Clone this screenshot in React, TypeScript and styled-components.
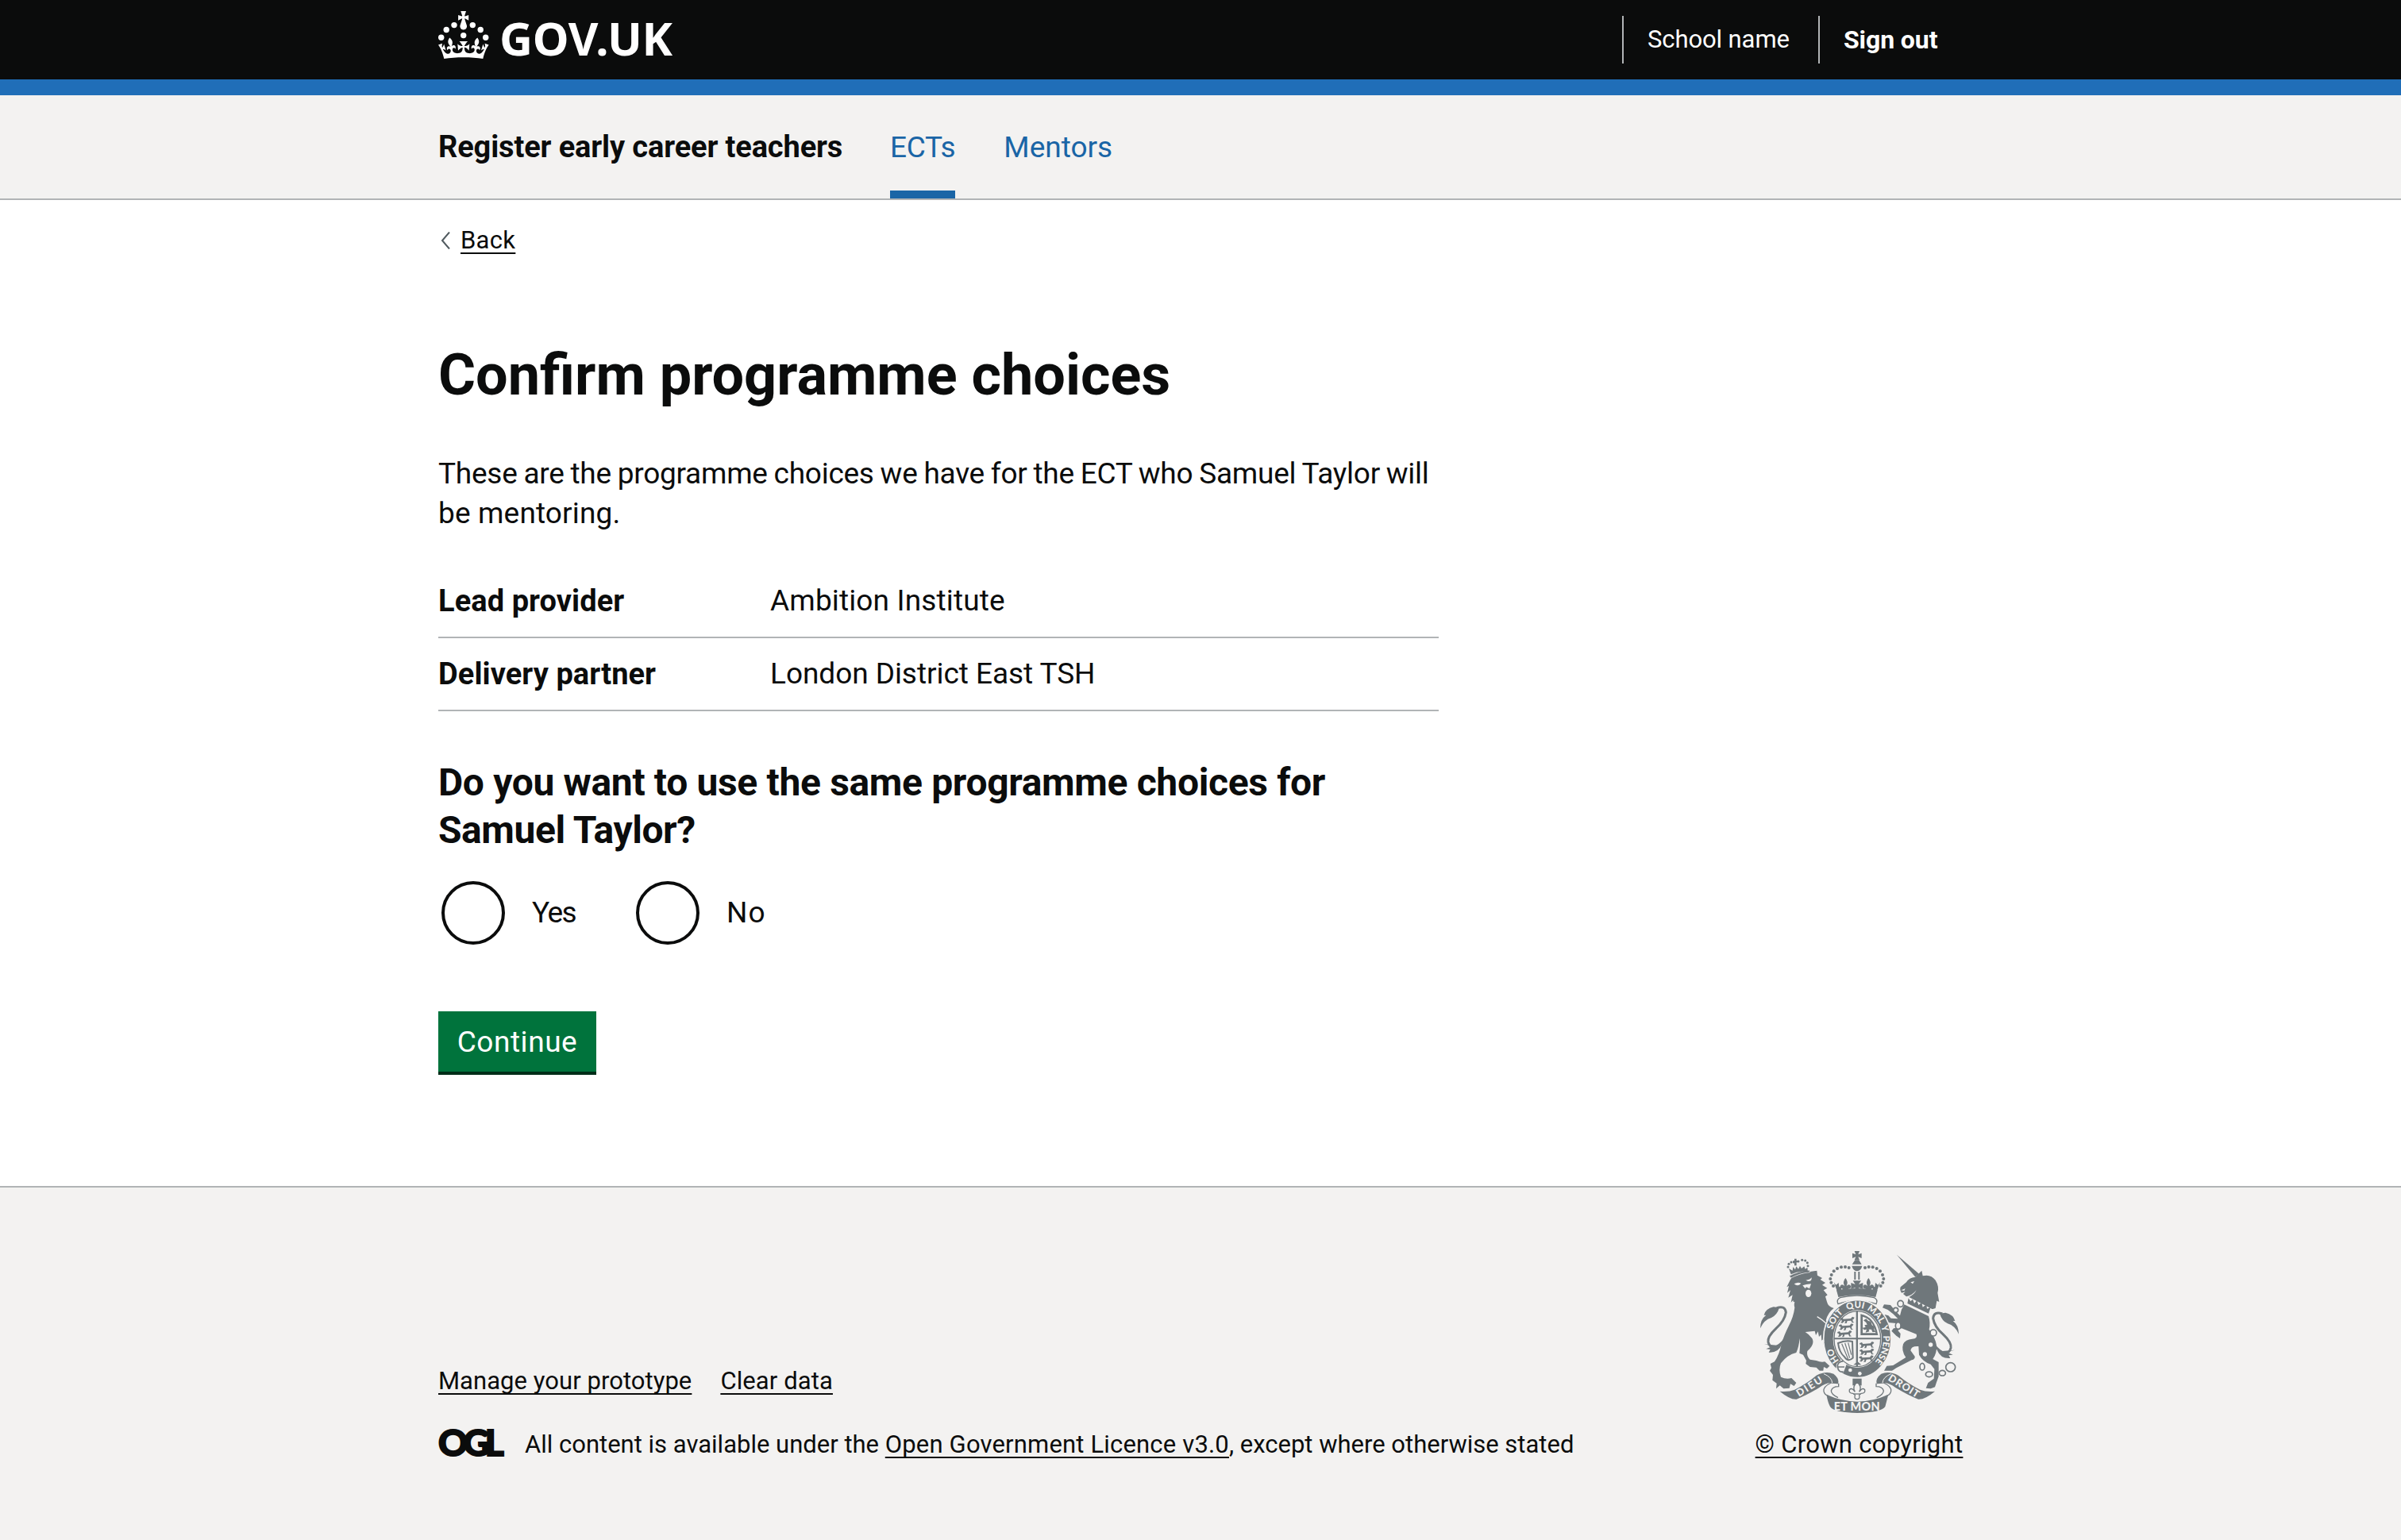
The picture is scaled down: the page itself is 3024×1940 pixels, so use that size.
import React from "react";
import styled, { createGlobalStyle } from "styled-components";

const ink = "#0b0c0c";
const grey = "#f3f2f1";
const rule = "#b1b4b6";
const blue = "#1a65a6";
const crestGrey = "#6f777b";

const GlobalStyle = createGlobalStyle`
  * { box-sizing: border-box; }
  body {
    margin: 0;
    background: #fff;
    color: ${ink};
    font-family: Roboto, "Liberation Sans", sans-serif;
    -webkit-font-smoothing: antialiased;
  }
  h1, h2, p, dl, dt, dd, legend { margin: 0; padding: 0; border: 0; }
`;

const Page = styled.div`
  display: flex;
  flex-direction: column;
  min-height: 1940px;
`;

const Container = styled.div`
  width: 1920px;
  margin: 0 auto;
`;

const Header = styled.header`
  height: 120px;
  background: ${ink};
  border-bottom: 20px solid #206eb8;
  color: #fff;
`;

const HeaderInner = styled(Container)`
  display: flex;
  justify-content: space-between;
  align-items: flex-start;
`;

const Logo = styled.a`
  display: flex;
  gap: 13px;
  padding-top: 14px;
  color: #fff;
`;

const Wordmark = styled.span`
  padding-top: 4px;
  font: 700 58px/60px "Noto Sans", "Liberation Sans", sans-serif;
  letter-spacing: -0.3px;
`;

const Account = styled.div`
  display: flex;
  padding-top: 20px;
`;

const AccountItem = styled.a<{ $width: number; $bold?: boolean }>`
  width: ${(p) => p.$width}px;
  height: 60px;
  padding-left: 30px;
  border-left: 2px solid ${rule};
  font-size: ${(p) => (p.$bold ? 32 : 31)}px;
  font-weight: ${(p) => (p.$bold ? 700 : 400)};
  line-height: 60px;
  letter-spacing: -0.1px;
`;

const ServiceNav = styled.nav`
  height: 132px;
  background: ${grey};
  border-bottom: 2px solid ${rule};
`;

const ServiceNavInner = styled(Container)`
  display: flex;
  gap: 61px;
  line-height: 131px;
`;

const ServiceName = styled.span`
  width: 508px;
  font-size: 38px;
  font-weight: 700;
  letter-spacing: -0.13px;
  white-space: nowrap;
`;

const NavLink = styled.a<{ $active?: boolean }>`
  height: 130px;
  min-width: 82px;
  color: ${blue};
  font-size: 37px;
  letter-spacing: ${(p) => (p.$active ? -0.33 : 0)}px;
  box-shadow: ${(p) => (p.$active ? `inset 0 -10px ${blue}` : "none")};
`;

const TextLink = styled.a<{ $spacing?: number }>`
  color: ${ink};
  letter-spacing: ${(p) => p.$spacing ?? 0}px;
  text-decoration: underline;
  text-decoration-thickness: 2px;
  text-underline-offset: 5px;
  text-decoration-skip-ink: none;
`;

const BackRow = styled.div`
  display: flex;
  align-items: center;
  gap: 13px;
  height: 40px;
  margin-top: 31px;
  padding-left: 3px;
  font-size: 31px;
  line-height: 40px;
`;

const Main = styled.main`
  width: 1260px;
  padding-bottom: 144px;
`;

const Title = styled.h1`
  margin-top: 112px;
  font-size: 72px;
  line-height: 75px;
  font-weight: 700;
`;

const Intro = styled.p`
  margin-top: 62px;
  font-size: 37px;
  line-height: 50px;
`;

const Line = styled.span<{ $spacing: number; $word?: number }>`
  display: block;
  letter-spacing: ${(p) => p.$spacing}px;
  word-spacing: ${(p) => p.$word ?? 0}px;
  white-space: nowrap;
`;

const SummaryList = styled.dl`
  margin-top: 60px;
`;

const SummaryRow = styled.div`
  display: grid;
  grid-template-columns: 418px 1fr;
  padding: 20px 0;
  border-bottom: 2px solid ${rule};
  line-height: 50px;
  &:first-child { padding-top: 0; }
`;

const Key = styled.dt`
  font-size: 38px;
  font-weight: 700;
  letter-spacing: 0.08px;
`;

const Value = styled.dd<{ $spacing: number }>`
  font-size: 37px;
  letter-spacing: ${(p) => p.$spacing}px;
`;

const Choices = styled.fieldset`
  min-width: 0;
  margin: 60px 0 0;
  padding: 0;
  border: 0;
`;

const Question = styled.legend`
  font-size: 48px;
  line-height: 60px;
  font-weight: 700;
`;

const Radios = styled.div`
  display: flex;
  padding: 34px 0 0 4px;
`;

const Radio = styled.label<{ $spacing: number }>`
  display: flex;
  align-items: center;
  gap: 34px;
  width: 245px;
  font-size: 37px;
  line-height: 80px;
  letter-spacing: ${(p) => p.$spacing}px;
`;

const RadioInput = styled.input`
  appearance: none;
  flex: none;
  width: 80px;
  height: 80px;
  margin: 0;
  border: 4px solid ${ink};
  border-radius: 50%;
  background: #fff;
`;

const Button = styled.button`
  display: block;
  width: 199px;
  height: 76px;
  margin-top: 84px;
  padding: 2px 0 0;
  border: 0;
  background: #00733c;
  box-shadow: 0 4px 0 #002d18;
  color: #fff;
  font: 400 37px/74px Roboto, "Liberation Sans", sans-serif;
  letter-spacing: 0.55px;
`;

const Footer = styled.footer`
  flex: 1;
  padding: 80px 0 100px;
  background: ${grey};
  border-top: 2px solid ${rule};
`;

const FooterInner = styled(Container)`
  display: flex;
  justify-content: space-between;
  align-items: flex-end;
  font-size: 31px;
  line-height: 40px;
`;

const FooterMeta = styled.div`
  display: flex;
  flex-direction: column;
  gap: 40px;
`;

const FooterLinks = styled.div`
  display: flex;
  gap: 36px;
`;

const Licence = styled.div`
  display: flex;
  white-space: pre;
`;

const Ogl = styled.span`
  width: 109px;
  height: 40px;
  font: 900 46px/34px Lato, "Liberation Sans", sans-serif;
  letter-spacing: -6px;
  -webkit-text-stroke: 2px ${ink};
`;

const Copyright = styled.div`
  display: flex;
  flex-direction: column;
  align-items: center;
  gap: 20px;
  width: 261px;
  white-space: nowrap;
`;

const Crown = () => (
  <svg width="64" height="60" viewBox="0 0 64 60" fill="currentColor" aria-hidden="true">
    <circle cx="20" cy="17.6" r="3.7" />
    <circle cx="10.2" cy="23.5" r="3.7" />
    <circle cx="3.7" cy="33.2" r="3.7" />
    <circle cx="31.7" cy="30.6" r="3.7" />
    <circle cx="43.3" cy="17.6" r="3.7" />
    <circle cx="53.2" cy="23.5" r="3.7" />
    <circle cx="59.7" cy="33.2" r="3.7" />
    <path d="M33.1,9.8c.2-.1.3-.3.5-.5l4.6,2.4v-6.8l-4.6,1.5c-.1-.2-.3-.3-.5-.5l1.9-5.9h-6.7l1.9,5.9c-.2.1-.3.3-.5.5l-4.6-1.5v6.8l4.6-2.4c.1.2.3.3.5.5l-2.6,8c-.9,2.8,1.2,5.7,4.1,5.7h0c3,0,5.1-2.9,4.1-5.7l-2.6-8ZM37,37.9s-3.4,3.8-4.1,6.1c2.2,0,4.2-.5,6.4-2.8l-.7,8.5c-2-2.8-4.4-4.1-5.7-3.8.1,3.1.5,6.7,5.8,7.2,3.7.3,6.7-1.5,7-3.8.4-2.6-2-4.3-3.7-1.6-1.4-4.5,2.4-6.1,4.9-3.2-1.9-4.5-1.8-7.7,2.4-10.9,3,4,2.6,7.3-1.2,11.1,2.4-1.3,6.2,0,4,4.6-1.2-2.8-3.7-2.2-4.2.2-.3,1.7.7,3.7,3,4.2,1.9.3,4.7-.9,7-5.9-1.3,0-2.4.7-3.9,1.7l2.4-8c.6,2.3,1.4,3.7,2.2,4.5.6-1.6.5-2.8,0-5.3l5,1.8c-2.6,3.6-5.2,8.7-7.3,17.5-7.4-1.1-15.7-1.7-24.5-1.7h0c-8.8,0-17.1.6-24.5,1.7-2.1-8.9-4.7-13.9-7.3-17.5l5-1.8c-.5,2.5-.6,3.7,0,5.3.8-.8,1.6-2.3,2.2-4.5l2.4,8c-1.5-1-2.6-1.7-3.9-1.7,2.3,5,5.2,6.2,7,5.9,2.3-.4,3.3-2.4,3-4.2-.5-2.4-3-3.1-4.2-.2-2.2-4.6,1.6-6,4-4.6-3.7-3.7-4.2-7.1-1.2-11.1,4.2,3.2,4.3,6.4,2.4,10.9,2.5-2.8,6.3-1.3,4.9,3.2-1.8-2.7-4.1-1-3.7,1.6.3,2.3,3.3,4.1,7,3.8,5.4-.5,5.7-4.2,5.8-7.2-1.3-.2-3.7,1-5.7,3.8l-.7-8.5c2.2,2.3,4.2,2.7,6.4,2.8-.7-2.3-4.1-6.1-4.1-6.1h10.6,0Z" />
  </svg>
);

const Chevron = () => (
  <svg width="12" height="22" viewBox="0 0 12 22" fill="none" aria-hidden="true">
    <path d="M11 0.5L2 11l9 10.5" stroke="#505a5f" strokeWidth="2" />
  </svg>
);

const crownBeads = [
  [346, 167], [343, 153], [347, 138], [356, 124], [369, 114], [384, 109], [399, 108], [413, 111], [354, 180],
];

const motto: [string, number][] = [
  ["HO", 57], ["SOIT", 129], ["QUI", 176], ["MAL", 219], ["Y", 250], ["PENSE", 292],
];

const Walker = ({ x, y }: { x: number; y: number }) => (
  <path
    transform={`translate(${x} ${y})`}
    d="M0 4l8-3 4 6 28-2 6-7 8 3-3 6-4 2 1 8 6 3-9 1-4-8-14 1-3 9-8 0 4-5-2-5-9 9-8-1 5-5-1-6-6-2z"
  />
);

const Tail = () => (
  <>
    <path
      d="M140 263Q172 252 175 280Q170 312 138 340Q104 372 108 392Q114 416 138 410Q162 398 184 362"
      fill="none"
      stroke={crestGrey}
      strokeWidth="9"
    />
    <path d="M78 340Q78 306 100 290L92 290Q98 266 128 259L150 262Q142 290 120 300Q92 308 78 340z" />
    <path d="M93 400L112 404L118 410L100 418L116 420L110 431Q146 434 160 400L140 404z" />
  </>
);

const Scroll = () => (
  <>
    <path d="M152 578Q185 581 208 572Q255 548 290 518Q325 500 355 512Q378 530 372 550L350 548Q330 543 300 565Q250 595 215 608Q190 610 152 578z" />
    <path
      d="M346 546Q315 560 318 578Q321 592 336 596M374 548L374 560Q350 560 346 576Q346 590 372 602"
      fill="none"
      stroke={crestGrey}
      strokeWidth="4"
    />
    <path d="M318 512Q348 524 350 546" fill="none" stroke={grey} strokeWidth="3" />
  </>
);

const Crest = () => (
  <svg width="250" height="204" viewBox="78 48 750 612" fill={crestGrey} aria-hidden="true">
    {/* imperial crown */}
    <path d="M434 48h19l-5 13 13-5v19l-13-5 5 12h-19l5-12-13 5V56l13 5z" />
    <path d="M436 82h15l10 16h-36zM424 104h39Q460 122 443 124Q428 122 424 104z" />
    {crownBeads.map(([x, y]) => (
      <React.Fragment key={`${x}-${y}`}>
        <circle cx={x} cy={y} r="6" />
        <circle cx={887 - x} cy={y} r="6" />
      </React.Fragment>
    ))}
    <path d="M433 126h6v30h-6zM448 126h6v30h-6z" />
    <path d="M428 160h31l-9 14 16-6v24l-16-6 4 14h-21l4-14-16 6v-24l16 6z" />
    {[400, 487].map((x) => (
      <path
        key={x}
        d={`M${x} 150q12 14 4 30q10-10 16 0q2 10-8 10l-6 10h-12l-6-10q-10 0-8-10q6-10 16 0q-8-16 4-30z`}
      />
    ))}
    <path d="M356 166l8 10 10-8 2 16 8-2v16l-14 6zM531 166l-8 10-10-8-2 16-8-2v16l14 6z" />
    <path d="M366 196Q443 182 521 196L514 222Q443 206 373 222z" />
    <path
      d="M380 224Q443 208 508 224Q524 232 516 248Q443 222 372 248Q364 232 380 224z"
      fill={grey}
      stroke={crestGrey}
      strokeWidth="4"
    />

    {/* lion */}
    <Tail />
    <path d="M190 160L197 148Q240 128 292 122L294 140L312 150L305 156L324 168L312 176L331 188L317 196L332 214L324 220L330 240Q334 258 356 264Q334 280 326 310L352 350Q360 372 352 400L338 394L328 406L322 394L316 402L322 376L310 386L308 364L300 372L296 352L288 366L284 350L248 354Q262 362 274 378Q286 400 256 426Q252 446 266 458L290 462Q308 470 322 466L340 482L330 492L318 486L316 500L302 500L290 488L266 486L250 474L252 462L240 440L226 434Q230 400 227 378Q224 410 214 432Q180 440 156 472Q146 496 156 524Q176 534 196 528L214 546L206 558L192 550L188 566L166 568L152 556L138 568L140 548L124 536L126 516L114 500L120 490L116 474L132 466Q150 440 158 400Q166 370 186 330Q204 296 208 262L202 234L194 242L200 214L184 224L192 196L180 206L186 180L178 184z" />
    <path
      d="M206 172q14-8 26-2q-12 14-26 2zM250 158q14 0 22-10q2 16-14 14zM238 178l14-4 18-2-6 18-12-6-4 6z"
      fill={grey}
    />
    <ellipse cx="260" cy="208" rx="11" ry="14" fill={grey} />
    <path d="M293 296Q330 318 346 346M206 240Q196 290 178 320" fill="none" stroke={grey} strokeWidth="4" />
    <path d="M188 142Q220 124 264 120L266 128Q226 132 194 150z" stroke={grey} strokeWidth="2" />
    <path d="M194 136l-8-22 14 8 2-14 8 10 4-12 8 10 6-12 6 10 10-8 4 10 8-6 2 18Q226 120 194 136z" />
    {[[183, 108], [186, 97], [195, 90], [205, 90], [222, 87], [236, 82], [248, 84], [256, 92], [258, 104]].map(([x, y]) => (
      <circle key={x} cx={x} cy={y} r="4.5" />
    ))}
    <path d="M207 77h8v7h6v7h-6v12h-8V91h-5v-7h5z" />

    {/* unicorn */}
    <g transform="translate(906 22)">
      <g transform="scale(-1 1)">
        <Tail />
      </g>
    </g>
    <path d="M594 62L678 134L664 146z" />
    <path d="M688 122L692 142Q722 134 740 158Q755 182 748 206L754 240L745 236L740 264L728 268L640 222Q660 212 668 196Q652 216 630 220L618 210L626 202L612 206Q604 196 608 184L630 166Q640 148 664 146z" />
    <path d="M646 166l14-4-6 10zM610 196l16-6-4 8z" fill={grey} />
    <path d="M632 224L732 270L718 294L628 250z" fill={grey} />
    <path d="M638 226l8 12 8-8 6 16 10-12 6 18 12-10 4 18 14-10 2 16 14-6-8 24-80-38z" />
    <path d="M622 250L714 294Q722 320 716 344Q740 376 744 404Q746 434 730 456L752 468L752 522L744 544L738 562L722 568L704 566L712 546L734 530L736 494L722 476Q692 466 678 440L676 408Q648 406 646 424L662 446Q664 456 650 460L592 490L576 500L546 500L556 482L580 480L628 450Q610 424 618 400Q626 382 652 380Q674 378 668 362L612 340L598 348L608 360L606 378L592 368L574 350L582 340L604 338L600 322L560 318L546 302L548 288L562 292L572 302L598 304L580 286L560 270L540 262L546 250L570 252L590 276L606 292Q610 268 622 250z" />
    {[[608, 247, 11, 12], [590, 271, 9, 9], [599, 330, 10, 13], [732, 357, 12, 12], [690, 485, 9, 13], [716, 514, 13, 10], [766, 509, 12, 10], [797, 487, 18, 17]].map(
      ([x, y, rx, ry]) => (
        <ellipse key={x} cx={x} cy={y} rx={rx} ry={ry} fill={grey} stroke={crestGrey} strokeWidth="5" />
      ),
    )}
    <circle cx="722" cy="402" r="8" fill={grey} />
    <circle cx="700" cy="438" r="8" fill={grey} />

    {/* garter */}
    <path id="garter" d="M445 497A98 117 0 0 1 445 263A98 117 0 0 1 445 497" pathLength="360" fill="none" />
    <ellipse cx="445" cy="380" rx="128" ry="147" stroke={grey} strokeWidth="5" />
    <ellipse cx="445" cy="380" rx="92" ry="109" fill={grey} />
    <ellipse cx="445" cy="380" rx="88" ry="105" fill="none" stroke={crestGrey} strokeWidth="4" />
    <g fill={grey} fontFamily="Lato, sans-serif" fontWeight="900" fontSize="34" textAnchor="middle">
      {motto.map(([word, offset]) => (
        <text key={word}>
          <textPath href="#garter" startOffset={offset}>{word}</textPath>
        </text>
      ))}
    </g>
    <path d="M366 474l18-16 20 18-12 32-18 0-10-14z" fill={grey} />
    <path d="M392 464q-24 2-22 22q4 22 22 18M372 486h24" fill="none" stroke={crestGrey} strokeWidth="5" />
    <circle cx="418" cy="498" r="7" fill={grey} />
    <circle cx="454" cy="511" r="7" fill={grey} />
    <path d="M326 350L350 360L352 398L338 394L328 406L320 396z" />

    {/* quartered shield */}
    <path d="M440 276h7v208h-7zM357 376h176v6H357z" />
    <path d="M430 478h30l-14-12z" />
    <Walker x={380} y={298} />
    <Walker x={376} y={324} />
    <Walker x={370} y={350} />
    <Walker x={454} y={392} />
    <Walker x={454} y={418} />
    <Walker x={452} y={444} />
    <path
      d="M457 286Q510 296 523 366H457zM465 296Q504 306 514 358H465z"
      fillRule="evenodd"
    />
    <path d="M468 310l10-6 8 8 10 2 4 14 10 6-2 12 6 8-12 0-4-10-10 0 2 8-14 4 4-12-10 2-6-8 12-2-4-8 10-2-4-8z" />
    <path
      d="M372 396Q400 384 426 390L428 452Q410 470 396 448Q376 430 372 396z"
      fill="none"
      stroke={crestGrey}
      strokeWidth="6"
    />
    <path d="M386 398L410 456M398 396L416 452M410 394L422 440" fill="none" stroke={crestGrey} strokeWidth="3.5" />

    {/* motto scroll */}
    <Scroll />
    <g transform="translate(890 0)">
      <g transform="scale(-1 1)">
        <Scroll />
      </g>
    </g>
    <path d="M328 590Q385 616 445 617Q505 616 562 590L550 636Q535 658 445 660Q355 658 342 636Q334 622 328 590z" />
    <g fill={grey} fontFamily="Lato, sans-serif" fontWeight="900" textAnchor="middle">
      <text transform="translate(270 571) rotate(-32)" fontSize="38" textLength="108">DIEU</text>
      <text transform="translate(614 569) rotate(32)" fontSize="38" textLength="130">DROIT</text>
      <text x="443" y="650" fontSize="43" textLength="174">ET MON</text>
    </g>
    <path d="M427 530h34v26h-34z" />
    <path
      d="M444 544Q464 560 452 580Q464 562 473 572Q476 586 460 586L452 592Q456 608 444 608Q432 608 436 592L428 586Q412 586 415 572Q424 562 436 580Q424 560 444 544z"
      fill={grey}
      stroke={crestGrey}
      strokeWidth="4"
    />
    <path d="M430 588h28" stroke={crestGrey} strokeWidth="4" />
  </svg>
);

export default function App() {
  return (
    <Page>
      <GlobalStyle />
      <Header>
        <HeaderInner>
          <Logo>
            <Crown />
            <Wordmark>GOV.UK</Wordmark>
          </Logo>
          <Account>
            <AccountItem $width={247}>School name</AccountItem>
            <AccountItem $width={182} $bold>Sign out</AccountItem>
          </Account>
        </HeaderInner>
      </Header>

      <ServiceNav>
        <ServiceNavInner>
          <ServiceName>Register early career teachers</ServiceName>
          <NavLink $active>ECTs</NavLink>
          <NavLink>Mentors</NavLink>
        </ServiceNavInner>
      </ServiceNav>

      <Container>
        <BackRow>
          <Chevron />
          <TextLink $spacing={0.3}>Back</TextLink>
        </BackRow>
        <Main>
          <Title>Confirm programme choices</Title>
          <Intro>
            <Line $spacing={-0.26} $word={-1}>
              These are the programme choices we have for the ECT who Samuel Taylor will
            </Line>
            <Line $spacing={0.15}>be mentoring.</Line>
          </Intro>
          <SummaryList>
            <SummaryRow>
              <Key>Lead provider</Key>
              <Value $spacing={0.15}>Ambition Institute</Value>
            </SummaryRow>
            <SummaryRow>
              <Key>Delivery partner</Key>
              <Value $spacing={-0.05}>London District East TSH</Value>
            </SummaryRow>
          </SummaryList>
          <Choices>
            <Question>
              <Line $spacing={-0.34}>Do you want to use the same programme choices for</Line>
              <Line $spacing={-0.45}>Samuel Taylor?</Line>
            </Question>
            <Radios>
              <Radio $spacing={-1.6}>
                <RadioInput type="radio" name="same" />
                Yes
              </Radio>
              <Radio $spacing={1.2}>
                <RadioInput type="radio" name="same" />
                No
              </Radio>
            </Radios>
          </Choices>
          <Button>Continue</Button>
        </Main>
      </Container>

      <Footer>
        <FooterInner>
          <FooterMeta>
            <FooterLinks>
              <TextLink $spacing={0.05}>Manage your prototype</TextLink>
              <TextLink $spacing={0.1}>Clear data</TextLink>
            </FooterLinks>
            <Licence>
              <Ogl>OGL</Ogl>
              <span>
                All content is available under the{" "}
                <TextLink $spacing={0.17}>Open Government Licence v3.0</TextLink>, except where otherwise stated
              </span>
            </Licence>
          </FooterMeta>
          <Copyright>
            <Crest />
            <TextLink $spacing={0.3}>© Crown copyright</TextLink>
          </Copyright>
        </FooterInner>
      </Footer>
    </Page>
  );
}
